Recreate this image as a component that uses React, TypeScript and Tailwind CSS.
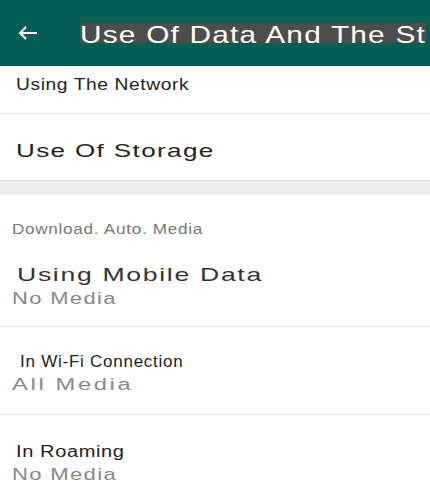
import React from 'react';

const font = { fontFamily: '"Liberation Sans", Arial, sans-serif' };

const Divider = () => <div className="h-px bg-[#e0e0e0]" />;

export default function App() {
    return (
        <div className="w-[430px] h-[500px] overflow-hidden bg-white" style={font}>
            <div className="h-[66px] bg-[#075e54] flex items-center pl-[18px]">
                <svg width="19" height="14" viewBox="0 0 19 14" fill="none" stroke="white" strokeWidth="2">
                    <path d="M19 7H2M8 1L2 7l6 6" />
                </svg>
                <div className="ml-[43px] w-[346px] h-[20px] flex items-center bg-[#4d4d4d] whitespace-nowrap">
                    <span className="inline-block origin-left scale-x-[1.24] text-white text-[24px] leading-none tracking-[1px] pt-[3px]">Use Of Data And The St</span>
                </div>
            </div>

            <div className="h-[47px] pt-[11px] pl-[16px]">
                <div className="w-fit origin-left scale-x-[1.2] text-[16px] leading-none text-[#222] tracking-[0.5px]">Using The Network</div>
            </div>
            <Divider />
            <div className="h-[66px] pt-[27px] pl-[16px]">
                <div className="w-fit origin-left scale-x-[1.37] text-[19px] leading-none text-[#222] tracking-[1px]">Use Of Storage</div>
            </div>
            <Divider />
            <div className="h-[14px] bg-[#eeeeee]" />

            <div className="h-[131px] pl-[12px] pt-[27px]">
                <div className="w-fit origin-left scale-x-[1.22] text-[14px] leading-none text-[#777] tracking-[0.6px]">Download. Auto. Media</div>
                <div className="ml-[5px] mt-[29px] w-fit origin-left scale-x-[1.4] text-[19px] leading-none text-[#333] tracking-[1.2px]">Using Mobile Data</div>
                <div className="mt-[7px] w-fit origin-left scale-x-[1.37] text-[16px] leading-none text-[#888] tracking-[1px]">No Media</div>
            </div>
            <Divider />
            <div className="h-[87px] pl-[12px] pt-[26px]">
                <div className="ml-[8px] w-fit text-[17px] leading-none text-[#222] tracking-[0.75px]">In Wi-Fi Connection</div>
                <div className="mt-[7px] w-fit origin-left scale-x-[1.48] text-[16px] leading-none text-[#888] tracking-[1.8px]">All Media</div>
            </div>
            <Divider />
            <div className="h-[85px] pl-[12px] pt-[29px]">
                <div className="ml-[4px] w-fit origin-left scale-x-[1.25] text-[16px] leading-none text-[#222] tracking-[0.5px]">In Roaming</div>
                <div className="mt-[6px] w-fit origin-left scale-x-[1.3] text-[17px] leading-none text-[#888] tracking-[1px]">No Media</div>
            </div>
        </div>
    );
}
